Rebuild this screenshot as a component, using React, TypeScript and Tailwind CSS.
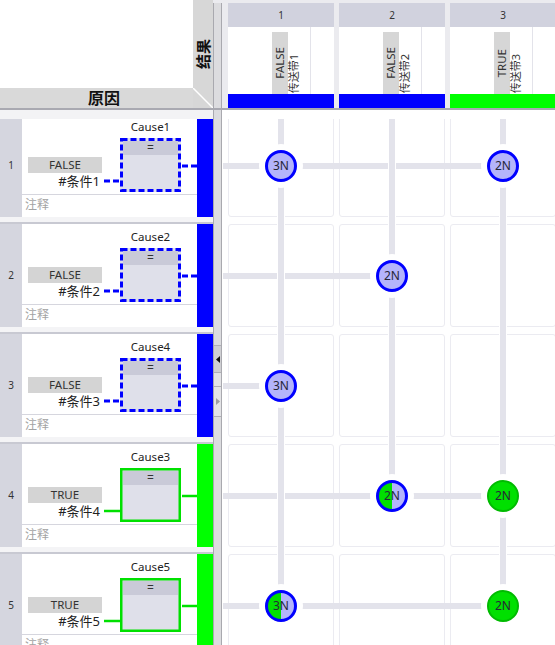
import React from "react";

type Kind = "off" | "on" | "mixed";

interface Effect {
  n: number;
  value: string;
  name: string;
  on: boolean;
}

interface Cause {
  n: number;
  cause: string;
  value: string;
  cond: string;
  on: boolean;
}

const COLS: Effect[] = [
  { n: 1, value: "FALSE", name: "传送带1", on: false },
  { n: 2, value: "FALSE", name: "传送带2", on: false },
  { n: 3, value: "TRUE", name: "传送带3", on: true },
];

const ROWS: Cause[] = [
  { n: 1, cause: "Cause1", value: "FALSE", cond: "#条件1", on: false },
  { n: 2, cause: "Cause2", value: "FALSE", cond: "#条件2", on: false },
  { n: 3, cause: "Cause4", value: "FALSE", cond: "#条件3", on: false },
  { n: 4, cause: "Cause3", value: "TRUE", cond: "#条件4", on: true },
  { n: 5, cause: "Cause5", value: "TRUE", cond: "#条件5", on: true },
];

const NODES: { r: number; c: number; label: string; kind: Kind }[] = [
  { r: 0, c: 0, label: "3N", kind: "off" },
  { r: 0, c: 2, label: "2N", kind: "off" },
  { r: 1, c: 1, label: "2N", kind: "off" },
  { r: 2, c: 0, label: "3N", kind: "off" },
  { r: 3, c: 1, label: "2N", kind: "mixed" },
  { r: 3, c: 2, label: "2N", kind: "on" },
  { r: 4, c: 0, label: "3N", kind: "mixed" },
  { r: 4, c: 2, label: "2N", kind: "on" },
];

// matrix geometry (px), shared by cells, lines and nodes
const COL_W = 106;
const COL_GAP = 5;
const ROW_H = 103;
const ROW_GAP = 7;
const PAD_X = 6;
const SCROLL = -5;

const cx = (c: number) => PAD_X + c * (COL_W + COL_GAP) + COL_W / 2;
const cy = (r: number) => SCROLL + r * (ROW_H + ROW_GAP) + 52;

const VERT = "[writing-mode:vertical-rl] [text-orientation:sideways] rotate-180 whitespace-nowrap";

function CauseHeader() {
  return (
    <div className="relative w-[213px] h-full flex">
      <div className="w-[193px] flex flex-col">
        <div className="h-[88px] bg-white" />
        <div className="h-[20px] bg-[#d9d9d9] flex items-center justify-center pl-[15px] text-[16px] font-bold leading-none text-[#111]">
          原因
        </div>
      </div>
      <div className="w-[20px] bg-[#d7d7d7] flex items-center justify-center">
        <span className={`${VERT} text-[15px] font-bold leading-[18px] text-[#111]`}>结果</span>
      </div>
      {/* bevel between the two strips */}
      <svg className="absolute left-[193px] top-[88px]" width="20" height="20">
        <line x1="0" y1="0" x2="20" y2="20" stroke="#ffffff" strokeWidth="1.5" />
      </svg>
    </div>
  );
}

function EffectHead({ col }: { col: Effect }) {
  return (
    <div className="w-[106px] shrink-0 flex flex-col pt-[3px]">
      <div className="h-[24px] bg-[#d1d2de] flex items-center justify-center text-[10px] text-[#333]">
        {col.n}
      </div>
      <div className="h-[67px] bg-white flex pl-[44px]">
        <div className="w-[16px] h-[62px] self-end bg-[#d6d6d6] flex items-center justify-center">
          <span className={`${VERT} text-[11.5px] leading-[16px] text-[#333]`}>{col.value}</span>
        </div>
        <div className="w-[12px] self-end flex justify-center pb-[1px]">
          <span className={`${VERT} text-[11px] leading-[12px] text-[#333]`}>{col.name}</span>
        </div>
        <div className="ml-[10px] w-px bg-[#e3e3ea]" />
      </div>
      <div className={col.on ? "h-[14px] bg-[#00ff00]" : "h-[14px] bg-[#0000ff]"} />
    </div>
  );
}

function Wire({ w, y, x1, on }: { w: number; y: number; x1: number; on: boolean }) {
  return (
    <svg width={w} height="80" className="shrink-0">
      <line
        x1={x1}
        y1={y}
        x2={w}
        y2={y}
        stroke={on ? "#00e000" : "#0000ff"}
        strokeWidth={on ? 2.5 : 3}
        strokeDasharray={on ? undefined : "6 3"}
      />
    </svg>
  );
}

function CauseRow({ row }: { row: Cause }) {
  return (
    <div className="flex h-[103px] shrink-0">
      <div className="w-[22px] bg-[#d5d6df] flex items-center justify-center text-[10px] text-[#333]">
        {row.n}
      </div>
      <div className="w-[175px] bg-white flex flex-col">
        <div className="h-[80px] flex">
          <div className="w-[80px] shrink-0 pl-[6px] pt-[43px] flex flex-col">
            <div className="h-[16px] bg-[#d4d4d4] flex items-center justify-center text-[11.5px] leading-none text-[#333]">
              {row.value}
            </div>
            <div className="h-[16px] pr-[2px] text-right text-[13px] leading-[16px] text-[#222]">{row.cond}</div>
          </div>
          <Wire w={18} y={67} x1={2} on={row.on} />
          <div className="w-[61px] shrink-0 flex flex-col pt-[5px]">
            <div className="h-[16px] text-center text-[11.5px] leading-[16px] text-[#222]">{row.cause}</div>
            <div className="relative mt-[3px] h-[54px] bg-[#dfe0ea]">
              <div className="mx-[3px] mt-[3px] h-[14px] bg-[#c9cad8] flex items-center justify-center text-[12px] leading-none text-[#333]">
                =
              </div>
              <svg className="absolute inset-0" width="61" height="54">
                {row.on ? (
                  <rect x="1.25" y="1.25" width="58.5" height="51.5" fill="none" stroke="#00e000" strokeWidth="2.5" />
                ) : (
                  <rect
                    x="1.5"
                    y="1.5"
                    width="58"
                    height="51"
                    fill="none"
                    stroke="#0000ff"
                    strokeWidth="3"
                    strokeDasharray="6 3"
                  />
                )}
              </svg>
            </div>
          </div>
          <Wire w={16} y={52} x1={1} on={row.on} />
        </div>
        <div className="h-px bg-[#d6d6de]" />
        <div className="pl-[3px] text-[12px] leading-[20px] text-[#a3a3a3]">注释</div>
      </div>
      <div className={row.on ? "w-[16px] bg-[#00ff00]" : "w-[16px] bg-[#0000ff]"} />
    </div>
  );
}

function Node({ label, kind }: { label: string; kind: Kind }) {
  const fill =
    kind === "on"
      ? "bg-[#00e000] border-2 border-[#00bb00]"
      : kind === "mixed"
        ? "bg-[linear-gradient(90deg,#00e000_50%,#b4b4fb_50%)] border-[3px] border-[#0000ff]"
        : "bg-[#b4b4fb] border-[3px] border-[#0000ff]";
  return (
    <div
      className={`w-[32px] h-[32px] rounded-full flex items-center justify-center text-[12px] leading-none text-[#262636] shadow-[0_0_0_6px_#ffffff] ${fill}`}
    >
      {label}
    </div>
  );
}

function Matrix() {
  const lastCol = ROWS.map((_, r) => Math.max(...NODES.filter((n) => n.r === r).map((n) => n.c)));
  const lastRow = COLS.map((_, c) => Math.max(...NODES.filter((n) => n.c === c).map((n) => n.r)));

  return (
    <div className="w-[333px] bg-white flex flex-col">
      <div className="h-[9px] shrink-0" />
      <div className="relative flex-1 overflow-hidden">
        <div className="-mt-[5px] flex flex-col gap-[7px] pl-[6px]">
          {ROWS.map((r) => (
            <div key={r.n} className="flex gap-[5px] h-[103px] shrink-0">
              {COLS.map((c) => (
                <div key={c.n} className="w-[106px] shrink-0 rounded-[3px] border border-[#ebebf1]" />
              ))}
            </div>
          ))}
        </div>

        {lastCol.map((c, r) => (
          <div
            key={`h${r}`}
            className="absolute h-[6px] bg-[#e3e3eb]"
            style={{ left: 1, top: cy(r) - 3, width: cx(c) - 1 }}
          />
        ))}
        {lastRow.map((r, c) => (
          <div
            key={`v${c}`}
            className="absolute w-[8px] border-x border-white bg-[#e3e3eb]"
            style={{ left: cx(c) - 4, top: 0, height: cy(r) }}
          />
        ))}
        {NODES.map((n) => (
          <div key={`${n.r}-${n.c}`} className="absolute" style={{ left: cx(n.c) - 16, top: cy(n.r) - 16 }}>
            <Node label={n.label} kind={n.kind} />
          </div>
        ))}
      </div>
    </div>
  );
}

function Splitter({ buttons }: { buttons?: boolean }) {
  return (
    <div className="w-[9px] shrink-0 border-x border-[#a9a9af] bg-[#dcdcdf] flex flex-col">
      {buttons && (
        <>
          <div className="h-[235px]" />
          <div className="h-[28px] border-y border-[#b0b0b6] bg-[#cfcfd3] flex items-center justify-center">
            <svg width="4" height="7">
              <polygon points="4,0 0,3.5 4,7" fill="#111111" />
            </svg>
          </div>
          <div className="h-[14px] border-b border-[#b0b0b6] bg-[#e3e3e6]" />
          <div className="h-[30px] border-b border-[#b0b0b6] bg-[#e3e3e6] flex items-center justify-center">
            <svg width="4" height="7">
              <polygon points="0,0 4,3.5 0,7" fill="#9c9ca0" />
            </svg>
          </div>
        </>
      )}
    </div>
  );
}

export default function App() {
  return (
    <div className="w-[555px] h-[645px] overflow-hidden bg-[#ebebef] font-['Noto_Sans','Noto_Sans_CJK_SC',sans-serif]">
      {/* header */}
      <div className="flex h-[108px]">
        <CauseHeader />
        <div className="pt-[3px] flex">
          <Splitter />
        </div>
        <div className="flex-1 flex gap-[5px] pl-[6px] overflow-hidden">
          {COLS.map((c) => (
            <EffectHead key={c.n} col={c} />
          ))}
        </div>
      </div>
      <div className="h-[2px] bg-[#a9a9b1]" />

      {/* body */}
      <div className="flex h-[535px]">
        <div className="w-[213px] shrink-0 flex flex-col bg-[#f3f3f5]">
          <div className="h-[9px] shrink-0" />
          <div className="flex-1 overflow-hidden">
            <div className="-mt-[12px] flex flex-col">
              {ROWS.map((r) => (
                <React.Fragment key={r.n}>
                  <div className="h-[5px] shrink-0 bg-[#f4f4f6]" />
                  <div className="h-[2px] shrink-0 bg-[#c8c9d2]" />
                  <CauseRow row={r} />
                </React.Fragment>
              ))}
            </div>
          </div>
        </div>
        <Splitter buttons />
        <Matrix />
      </div>
    </div>
  );
}
